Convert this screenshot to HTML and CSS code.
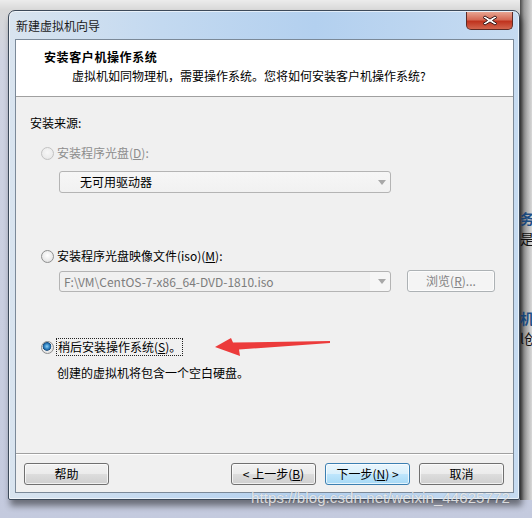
FILE: index.html
```html
<!DOCTYPE html>
<html lang="zh-CN">
<head>
    <meta charset="UTF-8">
    <title>新建虚拟机向导</title>
    <link rel="stylesheet" href="styles.css">
</head>
<body>
    <div class="desktop">
        <!-- page behind the dialog, only its right edge shows -->
        <div class="behind">
            <p class="behind-head">务</p>
            <p class="behind-line">是上</p>
            <p class="behind-head behind-gap">机</p>
            <p class="behind-line">l创</p>
        </div>

        <div class="window">
            <div class="titlebar">
                <span class="title">新建虚拟机向导</span>
                <span class="close">
                    <svg width="16" height="11" viewBox="0 0 16 11">
                        <path d="M3 1 L8 4 L13 1 L15 2.5 L10.5 5.5 L15 8.5 L13 10 L8 7 L3 10 L1 8.5 L5.5 5.5 L1 2.5 Z" fill="#fff" stroke="#3a1a1a" stroke-width="1" stroke-linejoin="round"/>
                    </svg>
                </span>
            </div>

            <div class="client">
                <div class="header">
                    <div class="header-title">安装客户机操作系统</div>
                    <div class="header-sub">虚拟机如同物理机，需要操作系统。您将如何安装客户机操作系统?</div>
                </div>

                <div class="body">
                    <div class="group-label">安装来源:</div>

                    <div class="radio-row disabled row-first">
                        <span class="radio"></span>
                        <span>安装程序光盘(<u>D</u>):</span>
                    </div>
                    <div class="combo combo-first">
                        <span class="combo-text">无可用驱动器</span>
                        <span class="combo-arrow"></span>
                    </div>

                    <div class="radio-row row-second">
                        <span class="radio"></span>
                        <span>安装程序光盘映像文件(iso)(<u>M</u>):</span>
                    </div>
                    <div class="file-row">
                        <div class="combo combo-edit">
                            <span class="combo-text grey">F:\VM\CentOS-7-x86_64-DVD-1810.iso</span>
                            <span class="combo-arrow"></span>
                        </div>
                        <span class="btn btn-disabled browse">浏览(<u>R</u>)...</span>
                    </div>

                    <div class="radio-row row-third">
                        <span class="radio checked"></span>
                        <span class="focus">稍后安装操作系统(<u>S</u>)。</span>
                    </div>
                    <div class="desc">创建的虚拟机将包含一个空白硬盘。</div>
                </div>

                <div class="footer">
                    <span class="btn">帮助</span>
                    <span class="spacer"></span>
                    <span class="btn">&lt; 上一步(<u>B</u>)</span>
                    <span class="btn btn-default">下一步(<u>N</u>) &gt;</span>
                    <span class="btn">取消</span>
                </div>
            </div>
        </div>

        <!-- red annotation arrow drawn over the screenshot -->
        <svg class="arrow" width="120" height="24" viewBox="0 0 120 24">
            <path d="M0 12 L16 3 L18 7.5 L115 6 L115 8 L24 14.5 L25 21 Z" fill="#ec3b3b"/>
        </svg>

        <div class="watermark">https://blog.csdn.net/weixin_44625772</div>
    </div>
</body>
</html>
```

FILE: styles.css
```css
body {
    margin: 0;
    font-family: "Noto Sans CJK SC", "Noto Sans", sans-serif;
    font-size: 12px;
    color: #000;
}
.desktop {
    position: relative;
    width: 532px;
    height: 518px;
    overflow: hidden;
    background: linear-gradient(to bottom, #ececec 0, #d8d8d8 10px, #cfd3e2 60px, #c4cade 100%);
}
.desktop p {
    margin: 0;
}

/* other window peeking out at the right */
.behind {
    position: absolute;
    left: 520px;
    top: 0;
    width: 12px;
    height: 500px;
    padding-top: 209px;
    box-sizing: border-box;
    background: linear-gradient(to right, #4a4a4a 0, #9a9a9a 4px, #d8d8d8 12px);
    line-height: 18px;
    font-size: 14px;
    white-space: nowrap;
}
.behind-head {
    color: #1d4f86;
    font-weight: bold;
}
.behind-line {
    color: #111;
    margin-top: 2px !important;
}
.behind-gap {
    margin-top: 62px !important;
}

/* dialog window */
.window {
    position: absolute;
    left: 8px;
    top: 10px;
    width: 512px;
    height: 490px;
    box-sizing: border-box;
    border: 1px solid #3d4a5a;
    border-radius: 7px 7px 2px 2px;
    background: linear-gradient(to right, #d9e4ef 0, #c3d9f0 30%, #b3d0ef 60%, #c6dbf1 100%);
    box-shadow: 2px 6px 6px rgba(0, 0, 0, 0.45), inset 0 0 0 1px rgba(255, 255, 255, 0.6);
    display: flex;
    flex-direction: column;
}
.titlebar {
    height: 28px;
    display: flex;
    align-items: flex-start;
}
.title {
    margin: 6px 0 0 7px;
    color: #1a1a1a;
}
.close {
    margin: 1px 6px 0 auto;
    width: 47px;
    height: 18px;
    box-sizing: border-box;
    border: 1px solid #5e2a24;
    border-top: none;
    border-radius: 0 0 5px 5px;
    background: linear-gradient(to bottom, #e8a491 0, #d56a55 45%, #c0331e 55%, #d3654d 100%);
    display: flex;
    align-items: center;
    justify-content: center;
}

.client {
    flex: 1;
    margin: 0 5px 6px 6px;
    border: 1px solid #7b8998;
    background: #f0f0f0;
    display: flex;
    flex-direction: column;
}
.header {
    height: 57px;
    background: #fff;
    border-bottom: 1px solid #a0a0a0;
    box-sizing: border-box;
    padding: 9px 0 0 28px;
    line-height: 16px;
}
.header-title {
    font-weight: bold;
    letter-spacing: 0.6px;
}
.header-sub {
    margin: 3px 0 0 28px;
}

.body {
    flex: 1;
    padding: 18px 0 0 14px;
    line-height: 16px;
}
.radio-row {
    display: flex;
    align-items: center;
    gap: 3px;
    margin-left: 11px;
    height: 16px;
}
.row-first { margin-top: 14px; }
.row-second { margin-top: 55px; }
.row-third { margin-top: 46px; height: 18px; }
.disabled {
    color: #8d8d8d;
}
.radio {
    width: 13px;
    height: 13px;
    box-sizing: border-box;
    border-radius: 50%;
    border: 1px solid #8e8f8f;
    background: radial-gradient(circle at 50% 40%, #ffffff 0, #eaeaea 60%, #d4d4d4 100%);
}
.disabled .radio {
    border-color: #c2c2c2;
    background: radial-gradient(circle at 50% 40%, #f7f7f7 0, #ececec 60%, #e0e0e0 100%);
}
.radio.checked {
    background: radial-gradient(circle at 45% 40%, #8fd0f4 0, #2b7fc0 30%, #1a4f80 45%, #eaeaea 52%, #d9d9d9 100%);
}
.focus {
    outline: 1px dotted #222;
    padding: 0 1px;
}

.combo {
    position: relative;
    margin: 10px 0 0 29px;
    width: 332px;
    height: 22px;
    box-sizing: border-box;
    border: 1px solid #b4b4b4;
    border-radius: 3px;
    background: linear-gradient(to bottom, #f6f6f6, #f1f1f1);
    display: flex;
    align-items: center;
}
.combo-text {
    padding-left: 20px;
    flex: 1;
}
.combo-arrow {
    width: 0;
    height: 0;
    margin-right: 4px;
    border-left: 4px solid transparent;
    border-right: 4px solid transparent;
    border-top: 5px solid #a8a8a8;
}
.file-row {
    display: flex;
    align-items: flex-start;
}
.combo-edit {
    margin-top: 7px;
    height: 21px;
    background: linear-gradient(to right, #f0f0f0 0, #f0f0f0 310px, #f6f6f6 310px);
}
.combo-edit .combo-text {
    padding-left: 4px;
}
.grey {
    color: #7d7d7d;
}
.desc {
    margin: 9px 0 0 27px;
}

.btn {
    width: 85px;
    height: 22px;
    box-sizing: border-box;
    border: 1px solid #707070;
    border-radius: 3px;
    background: linear-gradient(to bottom, #f2f2f2 0, #ebebeb 50%, #dddddd 51%, #cfcfcf 100%);
    box-shadow: inset 0 0 0 1px rgba(255, 255, 255, 0.7);
    display: flex;
    align-items: center;
    justify-content: center;
    line-height: 16px;
}
.btn-disabled {
    border-color: #adb2b5;
    background: #f4f4f4;
    color: #838383;
}
.browse {
    margin: 6px 0 0 16px;
    width: 88px;
}
.btn-default {
    border-color: #3c7fb1;
    background: linear-gradient(to bottom, #eaf6fd 0, #d9f0fc 50%, #bee6fd 51%, #a7d9f5 100%);
}
.footer {
    height: 39px;
    box-sizing: border-box;
    border-top: 1px solid #a0a0a0;
    box-shadow: inset 0 1px #fff;
    padding: 9px 9px 0 8px;
    display: flex;
    gap: 9px;
}
.spacer {
    flex: 1;
    margin-right: 102px;
}

.arrow {
    position: absolute;
    left: 215px;
    top: 335px;
}
.watermark {
    position: absolute;
    left: 251px;
    top: 489px;
    font-family: "Liberation Sans", Arial, sans-serif;
    font-size: 15px;
    color: rgba(255, 255, 255, 0.75);
    text-shadow: 0 0 1px rgba(90, 90, 90, 0.5);
    letter-spacing: 0.1px;
}
```
